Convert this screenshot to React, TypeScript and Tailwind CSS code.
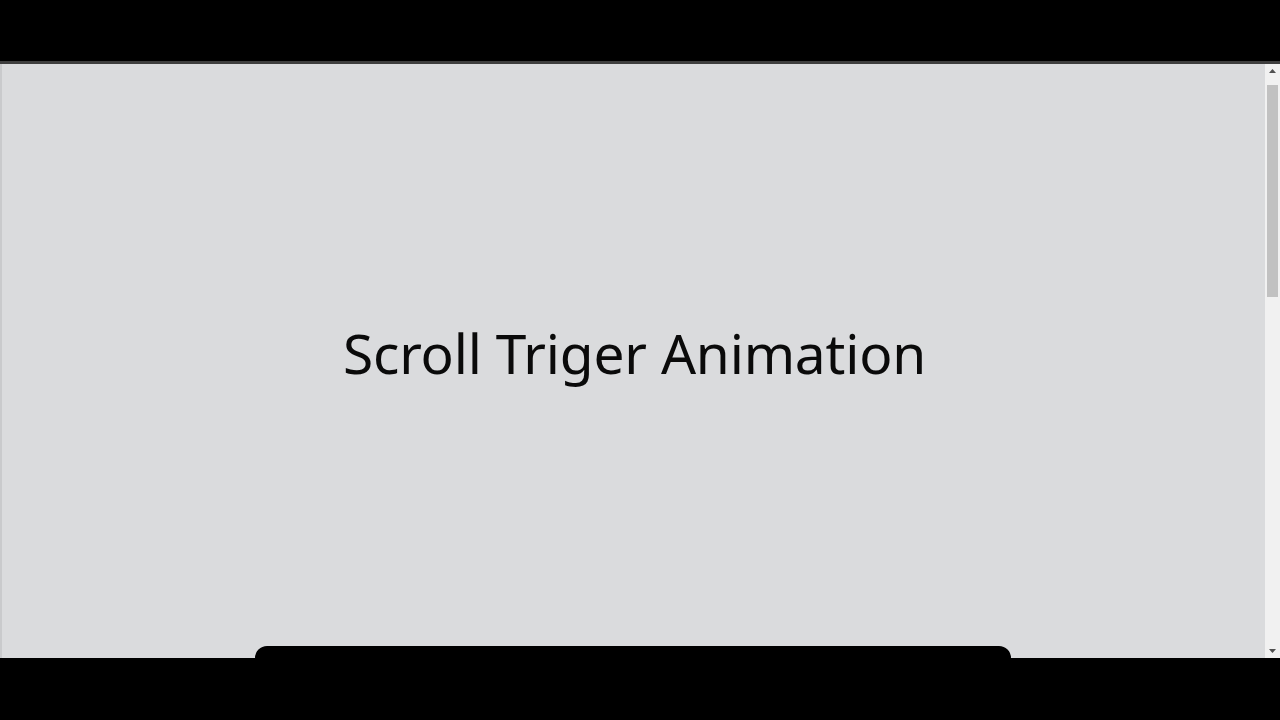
import React from "react";

const ScrollArrow = ({ down }: { down?: boolean }) => (
  <svg width="15" height="15" viewBox="0 0 15 15" className="shrink-0">
    {down ? (
      <path d="M4 6 L11 6 L7.5 10 Z" fill="#505050" />
    ) : (
      <path d="M4 9 L11 9 L7.5 5 Z" fill="#505050" />
    )}
  </svg>
);

export default function App() {
  return (
    <div className="w-full h-screen bg-black flex flex-col overflow-hidden [font-family:'Noto_Sans','Open_Sans',sans-serif]">
      <div className="h-[61px] shrink-0" />
      <div className="h-[597px] shrink-0 flex border-t-[3px] border-[#3e3e3e]">
        <div className="flex-1 flex flex-col bg-[#dadbdd] border-l-2 border-[#c9cacc]">
          <div className="flex-1 flex items-center justify-center pb-[6px]">
            <h1 className="text-[55px] leading-none font-normal text-[#0a0a0a] tracking-[-0.2px] pl-[2px]">
              Scroll Triger Animation
            </h1>
          </div>
          <div className="h-[12px] flex justify-start pl-[253px]">
            <div className="w-[756px] h-full bg-black rounded-t-[16px]" />
          </div>
        </div>
        <div className="w-[15px] flex flex-col bg-[#f1f1f1]">
          <ScrollArrow />
          <div className="px-[2px] pt-[6px]">
            <div className="h-[212px] bg-[#c1c1c1]" />
          </div>
          <div className="flex-1" />
          <ScrollArrow down />
        </div>
      </div>
    </div>
  );
}
